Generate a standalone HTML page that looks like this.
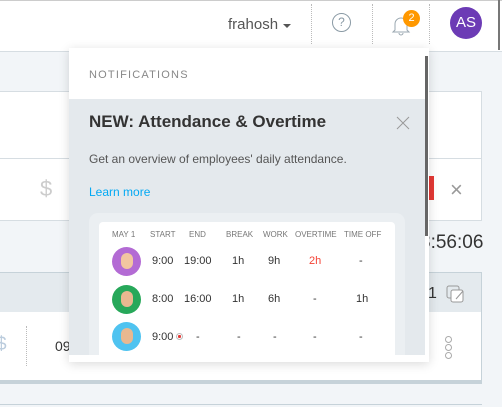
<html><head><style>
body{margin:0;width:502px;height:407px;overflow:hidden;background:#f2f5f8;font-family:"Liberation Sans",sans-serif;position:relative}
.a{position:absolute;white-space:nowrap}
</style></head><body>
<div class="a" style="left:0;top:0;width:502px;height:1px;background:#ccc"></div>
<div class="a" style="left:0;top:1px;width:502px;height:50px;background:#fff;border-bottom:1px solid #d6dde2"></div>
<div class="a" style="left:228px;top:16px;font-size:15px;color:#555">frahosh</div>
<div class="a" style="left:283px;top:24px;border:4px solid transparent;border-top:4px solid #555"></div>
<div class="a" style="left:311px;top:4px;height:40px;border-left:1px dotted #bbb"></div>
<div class="a" style="left:372px;top:4px;height:40px;border-left:1px dotted #bbb"></div>
<div class="a" style="left:429px;top:4px;height:40px;border-left:1px dotted #bbb"></div>
<div class="a" style="left:332px;top:13px;width:17px;height:17px;border:1px solid #8a9aa5;border-radius:50%;font-size:12px;color:#8a9aa5;text-align:center;line-height:17px">?</div>
<svg class="a" style="left:391px;top:14px" width="20" height="22" viewBox="0 0 20 22"><path d="M4 16V10a6 6 0 0 1 12 0v6l2 2H2z M8 19a2 2 0 0 0 4 0" fill="none" stroke="#9aa7b0" stroke-width="1"/></svg>
<div class="a" style="left:403px;top:10px;width:17px;height:17px;border-radius:50%;background:#ff9800;color:#fff;font-size:11px;text-align:center;line-height:17px">2</div>
<div class="a" style="left:450px;top:7px;width:32px;height:32px;border-radius:50%;background:#6c3bb5;color:#fff;font-size:15px;text-align:center;line-height:32px">AS</div>
<div class="a" style="left:498px;top:0;width:2px;height:50px;background:#777"></div>
<div class="a" style="left:0;top:91px;width:481px;height:128px;background:#fff;border:1px solid #d6dde2;border-left:none"></div>
<div class="a" style="left:0;top:158px;width:481px;height:1px;background:#d6dde2"></div>
<div class="a" style="left:40px;top:176px;font-size:22px;color:#ccc">$</div>
<div class="a" style="left:429px;top:176px;width:5px;height:24px;background:#e53935"></div>
<div class="a" style="left:450px;top:177px;font-size:22px;color:#999">×</div>
<div class="a" style="left:424px;top:117px;font-size:12px;color:#03a9f4">t</div>
<div class="a" style="left:420px;top:232px;font-size:19px;color:#333">3:56:06</div>
<div class="a" style="left:0;top:272px;width:481px;height:40px;background:#e4eaee;border:1px solid #c6d2d9;border-left:none"></div>
<div class="a" style="left:0;top:312px;width:481px;height:68px;background:#fff;border-right:1px solid #c6d2d9"></div>
<div class="a" style="left:0;top:380px;width:482px;height:4px;background:#c6d2d9"></div>
<div class="a" style="left:0;top:404px;width:482px;height:1px;background:#c6d2d9"></div>
<div class="a" style="left:-4px;top:334px;font-size:19px;color:#bcd">$</div>
<div class="a" style="left:26px;top:326px;height:40px;border-left:1px dotted #bbb"></div>
<div class="a" style="left:55px;top:338px;font-size:14px;color:#333">09</div>
<div class="a" style="left:428px;top:285px;font-size:16px;color:#333">1</div>
<svg class="a" style="left:446px;top:284px" width="22" height="20"><rect x="1" y="2" width="12" height="12" rx="2" fill="none" stroke="#999"/><rect x="5" y="6" width="12" height="12" rx="2" fill="#fff" stroke="#999"/><path d="M10 15l7-8" stroke="#999"/></svg>
<div class="a" style="left:445px;top:336px;width:5px;height:5px;border:1px solid #aaa;border-radius:50%"></div>
<div class="a" style="left:445px;top:344px;width:5px;height:5px;border:1px solid #aaa;border-radius:50%"></div>
<div class="a" style="left:445px;top:352px;width:5px;height:5px;border:1px solid #aaa;border-radius:50%"></div>

<div class="a" style="left:69px;top:48px;width:360px;height:314px;background:#fff;box-shadow:0 2px 10px rgba(0,0,0,.15)"></div>
<div class="a" style="left:89px;top:69px;font-size:11px;letter-spacing:1.2px;color:#888">NOTIFICATIONS</div>
<div class="a" style="left:69px;top:99px;width:356px;height:256px;background:#e4e9ed"></div>
<div class="a" style="left:425px;top:56px;width:3px;height:180px;background:#666"></div>
<div class="a" style="left:89px;top:112px;font-size:17px;font-weight:bold;color:#333">NEW: Attendance &amp; Overtime</div>
<svg class="a" style="left:396px;top:116px" width="14" height="14"><path d="M1 1L13 13M13 1L1 13" stroke="#999" stroke-width="1"/></svg>
<div class="a" style="left:89px;top:152px;font-size:12px;color:#555">Get an overview of employees' daily attendance.</div>
<div class="a" style="left:89px;top:185px;font-size:12px;color:#03a9f4">Learn more</div>
<div class="a" style="left:89px;top:213px;width:316px;height:142px;background:#ebeff2;border-radius:9px 9px 0 0"></div>
<div class="a" style="left:99px;top:222px;width:296px;height:133px;background:#fff;border-radius:4px 4px 0 0"></div>
<div class="a" style="top:230px;left:0;font-size:8px;color:#777">
<span class="a" style="left:112px">MAY 1</span><span class="a" style="left:150px">START</span><span class="a" style="left:189px">END</span><span class="a" style="left:226px">BREAK</span><span class="a" style="left:263px">WORK</span><span class="a" style="left:295px">OVERTIME</span><span class="a" style="left:344px">TIME OFF</span></div>
<div class="a" style="left:112px;top:247px;width:29px;height:29px;border-radius:50%;background:#b36bd4"></div>
<div class="a" style="left:112px;top:285px;width:29px;height:29px;border-radius:50%;background:#27a85a"></div>
<div class="a" style="left:112px;top:322px;width:29px;height:29px;border-radius:50%;background:#4fc3f0"></div>
<div class="a" style="left:121px;top:253px;width:12px;height:16px;border-radius:6px;background:#f2c6a0"></div>
<div class="a" style="left:121px;top:291px;width:12px;height:16px;border-radius:6px;background:#e8b890"></div>
<div class="a" style="left:121px;top:328px;width:12px;height:16px;border-radius:6px;background:#e8b890"></div>
<div class="a" style="top:255px;left:0;font-size:11px;color:#333">
<span class="a" style="left:152px">9:00</span><span class="a" style="left:184px">19:00</span><span class="a" style="left:232px">1h</span><span class="a" style="left:268px">9h</span><span class="a" style="left:309px;color:#f44336">2h</span><span class="a" style="left:359px">-</span></div>
<div class="a" style="top:293px;left:0;font-size:11px;color:#333">
<span class="a" style="left:152px">8:00</span><span class="a" style="left:184px">16:00</span><span class="a" style="left:232px">1h</span><span class="a" style="left:268px">6h</span><span class="a" style="left:313px">-</span><span class="a" style="left:356px">1h</span></div>
<div class="a" style="top:331px;left:0;font-size:11px;color:#333">
<span class="a" style="left:152px">9:00</span><span class="a" style="left:196px">-</span><span class="a" style="left:237px">-</span><span class="a" style="left:273px">-</span><span class="a" style="left:313px">-</span><span class="a" style="left:359px">-</span></div>
<div class="a" style="left:176px;top:333px;width:5px;height:5px;border:1px solid #bbb;border-radius:50%;background:radial-gradient(#e53935 45%,#fff 50%)"></div>
</body></html>
